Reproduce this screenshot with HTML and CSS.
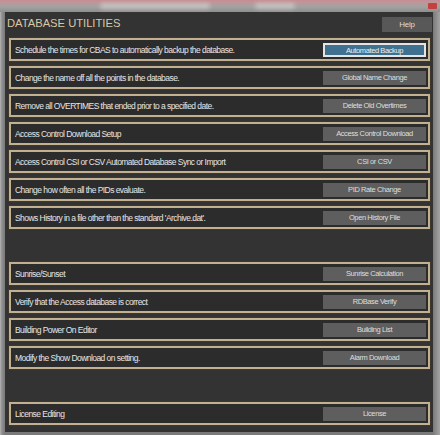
FILE: index.html
```html
<!DOCTYPE html>
<html>
<head>
<meta charset="utf-8">
<link rel="stylesheet" href="styles.css">
</head>
<body>
<div class="window">
  <div class="titlebar"><span class="blur blur-a"></span><span class="blur blur-b"></span><span class="close"></span></div>
  <div class="panel">
    <div class="header">
      <h1 class="title">DATABASE UTILITIES</h1>
      <button class="help">Help</button>
    </div>
    <div class="rows">
      <div class="row"><span class="desc">Schedule the times for CBAS to automatically backup the database.</span><button class="btn btn-active">Automated Backup</button></div>
      <div class="row"><span class="desc">Change the name off all the points in the database.</span><button class="btn">Global Name Change</button></div>
      <div class="row"><span class="desc">Remove all OVERTIMES that ended prior to a specified date.</span><button class="btn">Delete Old Overtimes</button></div>
      <div class="row"><span class="desc">Access Control Download Setup</span><button class="btn">Access Control Download</button></div>
      <div class="row"><span class="desc">Access Control CSI or CSV Automated Database Sync or Import</span><button class="btn">CSI or CSV</button></div>
      <div class="row"><span class="desc">Change how often all the PIDs evaluate.</span><button class="btn">PID Rate Change</button></div>
      <div class="row"><span class="desc">Shows History in a file other than the standard 'Archive.dat'.</span><button class="btn">Open History File</button></div>
      <div class="spacer"></div>
      <div class="row"><span class="desc">Sunrise/Sunset</span><button class="btn">Sunrise Calculation</button></div>
      <div class="row"><span class="desc">Verify that the Access database is correct</span><button class="btn">RDBase Verify</button></div>
      <div class="row"><span class="desc">Building Power On Editor</span><button class="btn">Building List</button></div>
      <div class="row"><span class="desc">Modify the Show Download on setting.</span><button class="btn">Alarm Download</button></div>
      <div class="spacer"></div>
      <div class="row"><span class="desc">License Editing</span><button class="btn">License</button></div>
    </div>
  </div>
</div>
</body>
</html>
```

FILE: styles.css
```css
html, body {
  margin: 0;
  padding: 0;
}

body {
  width: 440px;
  height: 435px;
  overflow: hidden;
  background: #858585;
  font-family: "Liberation Sans", Arial, sans-serif;
}

.window {
  width: 440px;
  height: 435px;
  display: flex;
  flex-direction: column;
  background: linear-gradient(to right, #b4b4b4 0, #8e8e8e 2px, #7a7a7a 5px, #7a7a7a 433px, #8c8c8c 436px, #a4a4a4 440px);
}

.titlebar {
  height: 12px;
  flex: none;
  display: flex;
  justify-content: flex-end;
  align-items: flex-start;
  padding: 3px 3px 0 0;
  box-sizing: border-box;
  background: linear-gradient(#c98c90 0, #b89a9c 3px, #a3a1a1 7px, #8e8e8e 12px);
  position: relative;
}

.blur {
  position: absolute;
  top: 3px;
  height: 6px;
  border-radius: 3px;
  background: rgba(235, 235, 235, 0.45);
  filter: blur(2px);
}

.blur-a { left: 100px; width: 110px; }
.blur-b { left: 255px; width: 40px; }

.close {
  width: 9px;
  height: 6px;
  background: #c4403c;
  border-radius: 1px;
  position: relative;
}

.panel {
  flex: 1;
  margin: 0 7px 3px 5px;
  background: #333333;
  display: flex;
  flex-direction: column;
}

.header {
  height: 26px;
  flex: none;
  display: flex;
  justify-content: space-between;
  align-items: flex-start;
  padding: 0 1px 0 2px;
}

.title {
  margin: 5px 0 0 0;
  font-size: 11.2px;
  line-height: 13px;
  font-weight: normal;
  color: #d8c8a6;
}

.help {
  margin-top: 5px;
  width: 50px;
  height: 15px;
  padding: 0;
  border: none;
  background: #585858;
  color: #dcdcdc;
  font-family: "Liberation Sans", Arial, sans-serif;
  font-size: 8px;
  letter-spacing: -0.2px;
}

.rows {
  display: flex;
  flex-direction: column;
  padding-left: 4px;
}

.row {
  width: 421px;
  height: 23px;
  margin-bottom: 5px;
  box-sizing: border-box;
  border: 2px solid #c2b191;
  box-shadow: 0 0 0 1px #3e372e;
  background: #2c2c2c;
  display: flex;
  align-items: center;
  justify-content: space-between;
}

.spacer {
  height: 28px;
  flex: none;
}

.desc {
  padding-left: 4px;
  font-size: 8.5px;
  letter-spacing: -0.55px;
  color: #e6e6e6;
  white-space: nowrap;
}

.btn {
  width: 103px;
  height: 14px;
  margin-right: 2px;
  padding: 0;
  box-sizing: border-box;
  border: none;
  background: #5e5e5e;
  color: #dedede;
  font-family: "Liberation Sans", Arial, sans-serif;
  font-size: 7.5px;
  letter-spacing: -0.4px;
  line-height: 12px;
}

.btn-active {
  background: #3f7090;
  border: 2px solid #e4e4e4;
  color: #eeeeee;
}
```
